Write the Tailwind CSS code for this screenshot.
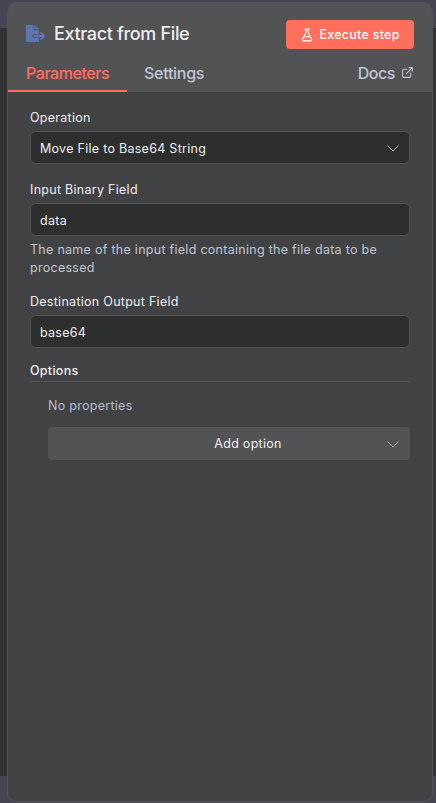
<!DOCTYPE html>
<html lang="en">
<head>
<meta charset="utf-8">
<title>Extract from File</title>
<script src="https://cdn.jsdelivr.net/npm/@tailwindcss/browser@4"></script>
</head>
<body class="h-[803px] w-[436px] overflow-hidden bg-linear-to-b from-[#464552] from-[28px] via-[#323234] via-[28px] to-[#323234] font-['Inter',sans-serif] text-[12.5px] text-[#eeeef2]">
<div class="h-full bg-linear-to-b from-transparent from-[776px] to-[#464552] to-[776px] pt-[2px] pr-[3px] pb-px pl-[7px]">
<main class="flex h-[800px] w-[426px] flex-col overflow-hidden rounded-[9px] border border-[#525355] bg-[#414244]">
  <header class="h-[89px] shrink-0 bg-[#525355]">
    <div class="flex h-[51px] items-start justify-between pr-[18px] pl-[18px] pt-[17px]">
      <div class="flex items-center pt-[2px]">
        <svg class="mt-[2px] h-[20px] w-[20px]" viewBox="0 0 20 20" fill="none">
          <path fill="#6275b3" d="M0 0H7.3V5.2H13V17H0Z"/>
          <path fill="#6275b3" d="M8.3 0L13 4.3H8.3Z"/>
          <path stroke="#525355" stroke-width="3.4" d="M6.5 11H17.5M14 7L18.3 11L14 15"/>
          <path stroke="#6275b3" stroke-width="1.8" d="M7.5 11H18M14.6 7.3L18.3 11L14.6 14.7"/>
        </svg>
        <h1 class="ml-[8px] text-[18px] leading-[24px] font-medium tracking-[-0.34px] whitespace-nowrap">Extract from File</h1>
      </div>
      <button class="flex h-[29px] w-[128px] items-center rounded-[4px] bg-[#ff6f5c] pl-[14px] text-[12.5px] font-medium tracking-[0.26px] whitespace-nowrap text-white">
        <svg class="mr-[5.5px] h-[14px] w-[14px]" viewBox="0 0 24 24" fill="none" stroke="currentColor" stroke-width="2" stroke-linecap="round" stroke-linejoin="round"><path d="M14 2v6a2 2 0 0 0 .245.96l5.51 10.08A2 2 0 0 1 18 22H6a2 2 0 0 1-1.755-2.96l5.51-10.08A2 2 0 0 0 10 8V2M6.453 15h11.094M8.5 2h7"/></svg>
        <span class="pt-[2px]">Execute step</span>
      </button>
    </div>
    <nav class="flex h-[38px] text-[16px] leading-[20px] font-medium tracking-[-0.45px] text-[#c1c5d4]">
      <a class="w-[119px] border-b-2 border-[#ff6f5c] pt-[9px] pl-[18px] text-[#ff6f5c]">Parameters</a>
      <a class="pt-[9px] pl-[17px] tracking-[-0.28px]">Settings</a>
      <a class="ml-auto flex pt-[9px] pr-[18px]">Docs
        <svg class="mt-[3px] ml-[6px] h-[13px] w-[13px]" viewBox="0 0 24 24" fill="none" stroke="currentColor" stroke-width="2" stroke-linecap="round" stroke-linejoin="round"><path d="M15 3h6v6M10 14 21 3M18 13v6a2 2 0 0 1-2 2H5a2 2 0 0 1-2-2V8a2 2 0 0 1 2-2h6"/></svg>
      </a>
    </nav>
  </header>
  <section class="flex flex-col pt-[17px] pr-[22px] pl-[22px] leading-[18px] tracking-[0.28px]">
    <label class="h-[22px]">Operation</label>
    <div class="flex h-[33px] items-center justify-between rounded-[5px] border border-[#525355] bg-[#2d2e2e] pr-[9px] pl-[9px]"><span class="pt-[2px]">Move File to Base64 String</span>
      <svg class="h-[14px] w-[14px]" viewBox="0 0 14 14" fill="none" stroke="#b4b7c2" stroke-width="1" stroke-linecap="round" stroke-linejoin="round"><path d="M1.7 4.7L7 10L12.3 4.7"/></svg>
    </div>
    <label class="mt-[17px] h-[22px]">Input Binary Field</label>
    <div class="flex h-[33px] items-center rounded-[5px] border border-[#525355] bg-[#2d2e2e] pt-[2px] pl-[9px]">data</div>
    <p class="mt-[5px] text-[#c1c5d4]">The name of the input field containing the file data to be processed</p>
    <label class="mt-[16px] h-[22px]">Destination Output Field</label>
    <div class="flex h-[33px] items-center rounded-[5px] border border-[#525355] bg-[#2d2e2e] pt-[2px] pl-[9px]">base64</div>
    <h2 class="mt-[14px] h-[20px] border-b border-[#525355] font-medium">Options</h2>
    <p class="mt-[15px] ml-[18px] text-[#b8bccb]">No properties</p>
    <div class="mt-[12px] ml-[18px] flex h-[33px] items-center rounded-[4px] bg-[#525355] pr-[10px]">
      <span class="flex-1 pl-[62px] text-center">Add option</span>
      <svg class="h-[14px] w-[14px]" viewBox="0 0 14 14" fill="none" stroke="#a3a6b2" stroke-width="1" stroke-linecap="round" stroke-linejoin="round"><path d="M1.7 4.7L7 10L12.3 4.7"/></svg>
    </div>
  </section>
</main>
</div>
</body>
</html>
